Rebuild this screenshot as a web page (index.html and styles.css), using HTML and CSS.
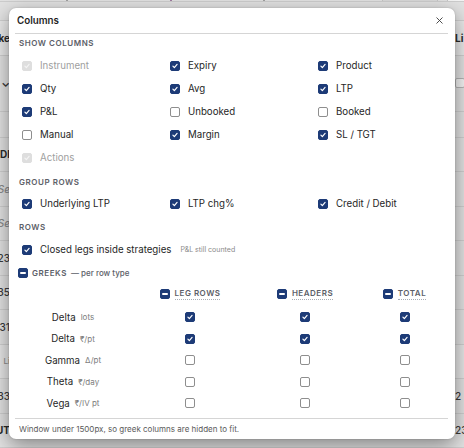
FILE: index.html
```html
<!DOCTYPE html>
<html lang="en">
<head>
<meta charset="utf-8">
<title>Positions – Columns</title>
<link rel="stylesheet" href="styles.css">
</head>
<body>
<div class="app">
  <div class="topbar">
    <span class="tb-tick tb-a"></span>
    <span class="tb-tick tb-b"></span>
    <span class="tb-tick tb-c"></span>
    <span class="tb-btn tb-btn-grey"></span>
    <span class="tb-btn tb-btn-white"></span>
  </div>
  <div class="bg-table">
    <div class="bg-row bg-top"><span class="bg-l"></span><span class="bg-r"></span></div>
    <div class="bg-row bg-head"><span class="bg-l strong">ke</span><span class="bg-r strong">Li</span></div>
    <div class="bg-row bg-filter"><span class="bg-l caret">⌄</span><span class="bg-r"><span class="bg-box"></span></span></div>
    <div class="bg-row bg-gap"><span class="bg-l"></span><span class="bg-r"></span></div>
    <div class="bg-row"><span class="bg-l strong">DI</span><span class="bg-r"></span></div>
    <div class="bg-row"><span class="bg-l soft">Se</span><span class="bg-r"></span></div>
    <div class="bg-row"><span class="bg-l soft">Se</span><span class="bg-r"></span></div>
    <div class="bg-row"><span class="bg-l">23</span><span class="bg-r"></span></div>
    <div class="bg-row"><span class="bg-l">35</span><span class="bg-r"></span></div>
    <div class="bg-row"><span class="bg-l">31</span><span class="bg-r"></span></div>
    <div class="bg-row bg-sub"><span class="bg-l tiny">Li</span><span class="bg-r"></span></div>
    <div class="bg-row"><span class="bg-l">33</span><span class="bg-r">2</span></div>
    <div class="bg-row"><span class="bg-l strong">UT</span><span class="bg-r num">23</span></div>
  </div>
</div>

<div class="modal" role="dialog" aria-label="Columns">
  <div class="modal-head">
    <span class="modal-title">Columns</span>
    <svg class="close" width="7" height="7" viewBox="0 0 7 7"><path d="M0.5 0.5L6.5 6.5M6.5 0.5L0.5 6.5" stroke="#3a3a3a" stroke-width="0.9" fill="none"/></svg>
  </div>

  <div class="sec">Show columns</div>
  <div class="grid grid-first">
    <label class="opt off"><span class="cb dis"><svg viewBox="0 0 10 10"><polyline points="2.4,5.2 4.2,7 7.6,3.1"/></svg></span>Instrument</label>
    <label class="opt"><span class="cb on"><svg viewBox="0 0 10 10"><polyline points="2.4,5.2 4.2,7 7.6,3.1"/></svg></span>Expiry</label>
    <label class="opt"><span class="cb on"><svg viewBox="0 0 10 10"><polyline points="2.4,5.2 4.2,7 7.6,3.1"/></svg></span>Product</label>

    <label class="opt"><span class="cb on"><svg viewBox="0 0 10 10"><polyline points="2.4,5.2 4.2,7 7.6,3.1"/></svg></span>Qty</label>
    <label class="opt"><span class="cb on"><svg viewBox="0 0 10 10"><polyline points="2.4,5.2 4.2,7 7.6,3.1"/></svg></span>Avg</label>
    <label class="opt"><span class="cb on"><svg viewBox="0 0 10 10"><polyline points="2.4,5.2 4.2,7 7.6,3.1"/></svg></span>LTP</label>

    <label class="opt"><span class="cb on"><svg viewBox="0 0 10 10"><polyline points="2.4,5.2 4.2,7 7.6,3.1"/></svg></span>P&amp;L</label>
    <label class="opt"><span class="cb"></span>Unbooked</label>
    <label class="opt"><span class="cb"></span>Booked</label>

    <label class="opt"><span class="cb"></span>Manual</label>
    <label class="opt"><span class="cb on"><svg viewBox="0 0 10 10"><polyline points="2.4,5.2 4.2,7 7.6,3.1"/></svg></span>Margin</label>
    <label class="opt"><span class="cb on"><svg viewBox="0 0 10 10"><polyline points="2.4,5.2 4.2,7 7.6,3.1"/></svg></span>SL / TGT</label>

    <label class="opt off"><span class="cb dis"><svg viewBox="0 0 10 10"><polyline points="2.4,5.2 4.2,7 7.6,3.1"/></svg></span>Actions</label>
  </div>

  <div class="sec sec-group">Group rows</div>
  <div class="grid">
    <label class="opt"><span class="cb on"><svg viewBox="0 0 10 10"><polyline points="2.4,5.2 4.2,7 7.6,3.1"/></svg></span>Underlying LTP</label>
    <label class="opt"><span class="cb on"><svg viewBox="0 0 10 10"><polyline points="2.4,5.2 4.2,7 7.6,3.1"/></svg></span>LTP chg%</label>
    <label class="opt"><span class="cb on"><svg viewBox="0 0 10 10"><polyline points="2.4,5.2 4.2,7 7.6,3.1"/></svg></span>Credit / Debit</label>
  </div>

  <div class="sec sec-rows">Rows</div>
  <label class="opt opt-wide"><span class="cb on"><svg viewBox="0 0 10 10"><polyline points="2.4,5.2 4.2,7 7.6,3.1"/></svg></span>Closed legs inside strategies<span class="hint">P&amp;L still counted</span></label>

  <div class="greeks-head">
    <span class="cb on minus"><span class="bar"></span></span>
    <span class="greeks-title">Greeks</span>
    <span class="greeks-sub">— per row type</span>
  </div>

  <div class="gtable">
    <div class="gcell ghrow"></div>
    <div class="gcell ghrow"><span class="ghead"><span class="cb on minus"><span class="bar"></span></span><span class="ghead-text">Leg rows</span></span></div>
    <div class="gcell ghrow"><span class="ghead"><span class="cb on minus"><span class="bar"></span></span><span class="ghead-text">Headers</span></span></div>
    <div class="gcell ghrow"><span class="ghead"><span class="cb on minus"><span class="bar"></span></span><span class="ghead-text">Total</span></span></div>

    <div class="gcell glabel">Delta<span class="unit">lots</span></div>
    <div class="gcell"><span class="cb on"><svg viewBox="0 0 10 10"><polyline points="2.4,5.2 4.2,7 7.6,3.1"/></svg></span></div>
    <div class="gcell"><span class="cb on"><svg viewBox="0 0 10 10"><polyline points="2.4,5.2 4.2,7 7.6,3.1"/></svg></span></div>
    <div class="gcell"><span class="cb on"><svg viewBox="0 0 10 10"><polyline points="2.4,5.2 4.2,7 7.6,3.1"/></svg></span></div>

    <div class="gcell glabel">Delta<span class="unit">₹/pt</span></div>
    <div class="gcell"><span class="cb on"><svg viewBox="0 0 10 10"><polyline points="2.4,5.2 4.2,7 7.6,3.1"/></svg></span></div>
    <div class="gcell"><span class="cb on"><svg viewBox="0 0 10 10"><polyline points="2.4,5.2 4.2,7 7.6,3.1"/></svg></span></div>
    <div class="gcell"><span class="cb on"><svg viewBox="0 0 10 10"><polyline points="2.4,5.2 4.2,7 7.6,3.1"/></svg></span></div>

    <div class="gcell glabel">Gamma<span class="unit">Δ/pt</span></div>
    <div class="gcell"><span class="cb"></span></div>
    <div class="gcell"><span class="cb"></span></div>
    <div class="gcell"><span class="cb"></span></div>

    <div class="gcell glabel">Theta<span class="unit">₹/day</span></div>
    <div class="gcell"><span class="cb"></span></div>
    <div class="gcell"><span class="cb"></span></div>
    <div class="gcell"><span class="cb"></span></div>

    <div class="gcell glabel">Vega<span class="unit">₹/IV pt</span></div>
    <div class="gcell"><span class="cb"></span></div>
    <div class="gcell"><span class="cb"></span></div>
    <div class="gcell"><span class="cb"></span></div>
  </div>

  <div class="modal-foot">Window under 1500px, so greek columns are hidden to fit.</div>
</div>
</body>
</html>
```

FILE: styles.css
```css
html, body {
  margin: 0;
  padding: 0;
}

body {
  width: 464px;
  height: 448px;
  overflow: hidden;
  position: relative;
  background: #e2e2e2;
  font-family: Inter, "Noto Sans", sans-serif;
  color: #262626;
}

/* ---------- page behind the dialog ---------- */
.app {
  height: 448px;
  display: flex;
  flex-direction: column;
}

.topbar {
  height: 6px;
  overflow: hidden;
  display: flex;
  align-items: flex-start;
  border-bottom: 1px solid #cdcdcd;
  box-sizing: border-box;
}

/* descender marks of the toolbar labels above the fold */
.tb-tick {
  width: 2px;
  height: 3px;
  background: #8a8a8a;
  border-radius: 1px;
}
.tb-a { margin-left: 66px; }
.tb-b { margin-left: 102px; background: #8a5a8a; }
.tb-c { margin-left: 91px; }

.tb-btn {
  height: 20px;
  box-sizing: border-box;
  border: 1px solid #c4c4c4;
  border-radius: 4px;
  margin-top: -15px;
}
.tb-btn-grey {
  width: 56px;
  margin-left: auto;
  background: #d9d9d9;
}
.tb-btn-white {
  width: 24px;
  margin-left: 9px;
  margin-right: -7px;
  background: #f4f4f4;
}

.bg-table {
  display: flex;
  flex-direction: column;
}

.bg-row {
  height: 34.5px;
  flex: none;
  display: flex;
  align-items: center;
  justify-content: space-between;
  border-bottom: 1px solid #cfcfcf;
  box-sizing: border-box;
  font-size: 10px;
  font-weight: 500;
  color: #3a3a3a;
}
.bg-top { height: 19px; }
.bg-head { height: 35px; background: #e9e9e9; }
.bg-filter { height: 56px; }
.bg-gap { height: 26px; }
.bg-sub { background: #e6e6e6; }

.bg-l {
  width: 10px;
  overflow: hidden;
  display: flex;
  justify-content: flex-end;
  white-space: nowrap;
}
.bg-r {
  width: 9px;
  overflow: hidden;
  white-space: nowrap;
  display: flex;
}
.strong { font-weight: 700; color: #2a2a2a; }
.soft { font-style: italic; color: #8a8a8a; }
.tiny { font-size: 8px; color: #8d8d8d; }
.caret { font-size: 11px; font-weight: 700; }
.num { margin-left: -2px; }

.bg-box {
  width: 10px;
  height: 10px;
  flex: none;
  border: 1px solid #b5b5b5;
  border-radius: 2px;
  box-sizing: border-box;
  background: #f3f3f3;
}

/* ---------- dialog ---------- */
.modal {
  position: absolute;
  left: 9px;
  top: 8px;
  width: 446px;
  height: 431px;
  box-sizing: border-box;
  background: #fff;
  border-radius: 7px;
  box-shadow: 0 6px 20px rgba(0, 0, 0, 0.42), 0 0 2px rgba(0, 0, 0, 0.2);
  padding: 0 7px 0 6px;
  display: flex;
  flex-direction: column;
}

.modal-head {
  height: 26px;
  flex: none;
  box-sizing: border-box;
  border-bottom: 1px solid #d5d5d5;
  display: flex;
  align-items: center;
  justify-content: space-between;
  padding: 0 5px 0 2px;
}

.modal-title {
  font-size: 9.8px;
  font-weight: 600;
  color: #1f1f1f;
}

.close { display: block; }

.sec {
  font-size: 8px;
  font-weight: 600;
  letter-spacing: 0.55px;
  text-transform: uppercase;
  color: #5c6068;
  line-height: 12px;
  padding: 3px 4px;
  flex: none;
}
.sec-group { margin-top: 4px; }
.sec-rows { margin-top: 3px; }

.grid {
  display: grid;
  grid-template-columns: repeat(3, 148px);
  grid-auto-rows: 23px;
  padding-left: 7px;
  margin-top: 1px;
  flex: none;
}
.grid-first { margin-top: 2px; }

.opt {
  display: flex;
  align-items: center;
  gap: 8px;
  height: 23px;
  font-size: 9.7px;
  color: #262626;
  white-space: nowrap;
}
.opt.off { color: #a0a0a0; }

.opt-wide {
  padding-left: 7px;
  margin-top: 2px;
  flex: none;
}

.hint {
  font-size: 7px;
  color: #8a8a8a;
  margin-left: 1px;
}

/* checkbox look */
.cb {
  width: 10px;
  height: 10px;
  flex: none;
  box-sizing: border-box;
  border: 1px solid #8e8e8e;
  border-radius: 2px;
  background: #fff;
  display: inline-flex;
  align-items: center;
  justify-content: center;
}
.cb svg {
  width: 10px;
  height: 10px;
  display: block;
}
.cb polyline {
  fill: none;
  stroke: #fff;
  stroke-width: 1.5;
  stroke-linecap: round;
  stroke-linejoin: round;
}
.cb.on {
  background: #1d3b77;
  border-color: #1d3b77;
}
.cb.dis {
  background: #dedede;
  border-color: #dedede;
}
.cb.dis polyline { stroke: #f4f4f4; }

.cb.minus .bar {
  width: 6px;
  height: 1.6px;
  background: #fff;
  border-radius: 1px;
}

/* greeks block */
.greeks-head {
  display: flex;
  align-items: center;
  height: 18px;
  padding-left: 3px;
  margin-top: 3px;
  flex: none;
}
.greeks-title {
  margin-left: 4px;
  font-size: 8px;
  font-weight: 600;
  letter-spacing: 0.55px;
  text-transform: uppercase;
  color: #5c6068;
}
.greeks-sub {
  margin-left: 4px;
  font-size: 8px;
  font-weight: 500;
  color: #5c6068;
}

.gtable {
  display: grid;
  grid-template-columns: 116px 118px 112px 87px;
  grid-template-rows: 22.25px repeat(5, 21.5px);
  margin-top: 2px;
  flex: none;
}

.gcell {
  display: flex;
  align-items: center;
  justify-content: center;
}
.gcell.ghrow {
  align-items: flex-start;
  height: 20px;
}
.ghead {
  display: inline-flex;
  align-items: center;
  gap: 5px;
  height: 20px;
}
.ghead-text {
  font-size: 8px;
  font-weight: 600;
  letter-spacing: 0.5px;
  text-transform: uppercase;
  color: #5c6068;
  line-height: 11px;
  border-bottom: 1px dotted #a8adb5;
}

.glabel {
  font-size: 9.7px;
  color: #262626;
}
.unit {
  font-size: 8px;
  color: #7d7d7d;
  margin-left: 5px;
}

.modal-foot {
  margin-top: auto;
  height: 21px;
  flex: none;
  box-sizing: border-box;
  border-top: 1px solid #d5d5d5;
  font-size: 8px;
  line-height: 20px;
  color: #5a5a5a;
  padding-left: 4px;
}
```
